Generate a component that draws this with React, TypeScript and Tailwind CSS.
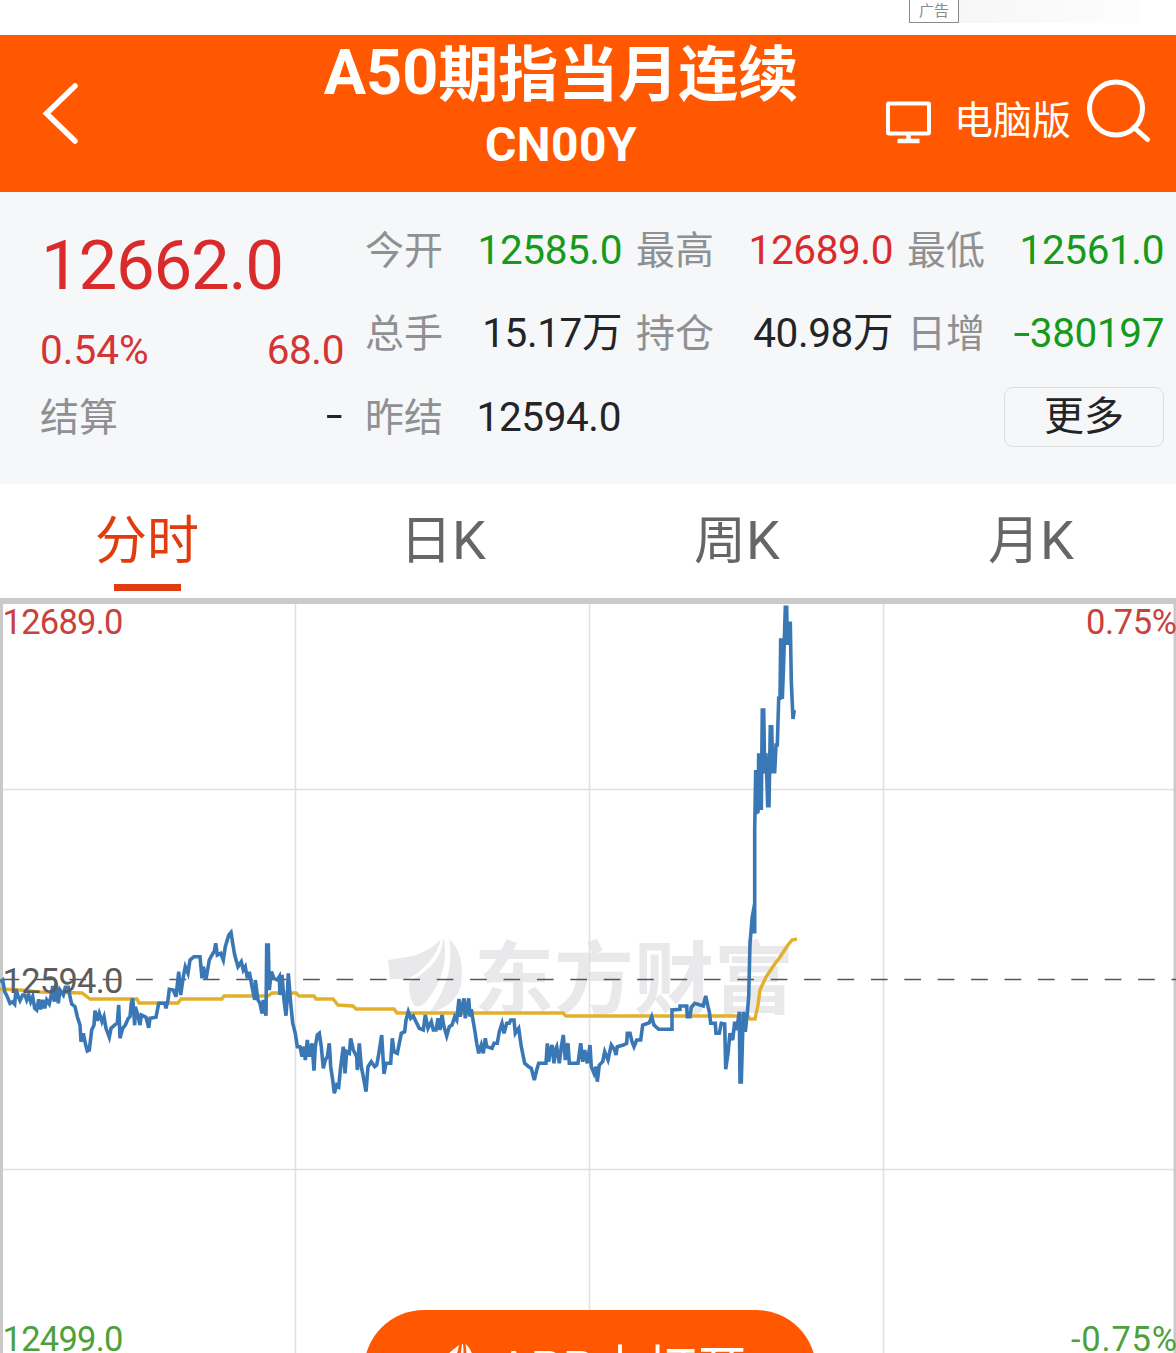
import { clsx } from "clsx";

type Tone = "up" | "down" | "plain";

type Quote = {
  label: string;
  value: string;
  tone: Tone;
};

type Segment = {
  x: number;
  y: number;
  points: string;
};

const toneClass: Record<Tone, string> = {
  up: "text-[#d92b2b]",
  down: "text-[#169a1c]",
  plain: "text-[#222426]",
};

const quoteRows: Quote[][] = [
  [
    { label: "今开", value: "12585.0", tone: "down" },
    { label: "最高", value: "12689.0", tone: "up" },
    { label: "最低", value: "12561.0", tone: "down" },
  ],
  [
    { label: "总手", value: "15.17万", tone: "plain" },
    { label: "持仓", value: "40.98万", tone: "plain" },
    { label: "日增", value: "-380197", tone: "down" },
  ],
];

const tabs = [
  { prefix: "分时", unit: "" },
  { prefix: "日", unit: "K" },
  { prefix: "周", unit: "K" },
  { prefix: "月", unit: "K" },
];

// Price samples, in thirds of a pixel relative to each segment's origin.
const priceSegments: Segment[] = [
  {
    x: 0,
    y: 900,
    points:
      "0,245 8,240 14,275 22,290 30,310 38,305 44,312 48,268 55,290 60,302 68,285 75,285 80,300 86,285 92,305 98,290 104,325 110,330 116,298 122,328 128,300 134,325 140,300 148,312 154,285 158,258 163,305 168,250 175,310 180,270 190,285 196,262 205,262 210,290 215,312 225,320 232,350 240,375 243,425 250,400 257,435 262,453 268,450 275,390 282,375 285,332 292,362 298,340 306,365 312,350 318,385 328,412 333,385 348,372 352,370 356,315 360,415 368,385 376,375 385,355 390,350 394,310 398,295 404,376 406,320 412,340 420,375 424,345 438,352 446,383 450,355 468,352 476,310 494,310 498,325 504,300 508,268 520,270 528,290 536,215 542,285 550,230 556,200 564,220 570,180 582,170 600,170 606,235 610,200 618,238 628,180 640,158",
  },
  {
    x: 160,
    y: 900,
    points:
      "163,155 167,130 172,165 182,160 190,180 196,140 206,105 213,97 218,130 224,165 234,200 244,185 250,210 256,200 262,235 268,215 276,260 284,300 286,240 294,300 300,310 306,340 310,300 318,347 320,135 325,135 328,270 334,215 342,235 352,240 358,230 360,285 366,225 372,300 378,347 382,290 385,220 392,310 398,370 406,400 412,440 420,440 426,470 432,440 436,480 442,420 448,470 456,430 462,512 466,440 472,405 478,400 484,440 490,505 496,480 502,470 508,430 512,500 518,540 523,580 530,555 536,560 542,500 550,440 555,520 560,455 568,460 572,415 580,450 590,470 592,510 598,430 604,500 610,530",
  },
  {
    x: 360,
    y: 900,
    points:
      "10,530 18,575 24,500 34,485 44,500 50,495 55,470 65,405 72,522 78,490 92,490 97,415 102,455 112,460 118,430 124,400 134,395 138,360 145,335 152,355 160,348 168,365 178,385 190,390 196,345 204,385 214,365 220,390 228,390 234,355 240,390 246,345 252,380 260,408 268,380 276,375 284,350 290,360 297,297 301,350 305,325 312,295 316,355 320,330 326,295 330,350 334,328 338,355 345,395 350,430 356,460 364,435 370,460 376,415 380,440 396,445 402,430 412,430 418,395 426,370 432,400 440,370 448,370 452,360 462,360 466,400 476,385 484,440 494,490 506,500 514,505 523,540 530,510 536,490 558,490 562,430 566,485 571,450 576,435 582,490 586,450 590,440 598,490 604,440 610,405 616,480 620,445 624,430 628,490 654,490 662,430 668,485 674,450 682,490",
  },
  {
    x: 580,
    y: 900,
    points:
      "22,490 30,435 34,500 42,520 48,500 52,545 58,495 68,485 74,455 84,480 94,435 104,450 108,465 112,440 130,435 140,430 142,400 150,400 156,425 162,440 170,420 182,420 188,375 208,368 215,350 222,375 236,388 276,388 276,330 300,328 300,318 320,318 322,350 330,350 334,322 344,310 370,318 377,288 384,320 388,335 392,370 406,370 408,400 418,400 424,370 434,372 437,508 444,460 450,400 458,420 464,365 470,390 478,335 480,546 484,546 490,335 496,395 502,340 506,290 510,130 516,60 518,95 522,95 524,10",
  },
  {
    x: 720,
    y: 595,
    points:
      "96,970 100,1010 104,1010 104,700 107,525 111,652 114,650 116,475 120,640 124,640 127,345 131,345 134,535 138,475 143,632 147,632 151,395 155,395 158,530 164,530 168,450 172,450 176,310 180,310 182,135 186,135 187,312 191,200 196,37 200,37 202,150 206,85 211,85 214,260 219,372 223,345",
  },
];

const averagePoints =
  "0,989 20,990 40,992 82,993 90,999 137,999 139,1003 178,1003 181,999 222,999 224,996 268,996 272,993 296,993 299,996 314,996 316,999 333,999 338,1005 353,1006 356,1009 394,1009 397,1013 563,1013 566,1016 748,1016 750,1019 755,1019 758,1005 760,990 766,977 774,965 780,957 788,945 792,940 797,939";

function toPixels({ x, y, points }: Segment): string {
  return points
    .split(" ")
    .map((pair) => {
      const [px, py] = pair.split(",").map(Number);
      return `${(x + px / 3).toFixed(1)},${(y + py / 3).toFixed(1)}`;
    })
    .join(" ");
}

const pricePoints = priceSegments.map(toPixels).join(" ");

function AdStrip() {
  return (
    <div className="flex h-[35px] items-start bg-white pl-[909px]">
      <span className="flex h-[23px] w-[50px] items-center justify-center border border-t-0 border-[#8a8a8a] text-[15px] leading-none text-[#8a8a8a]">
        广告
      </span>
      <span className="h-[23px] w-[182px] bg-linear-to-r from-[#f7f7f7] via-[#fafafa] to-[#fdfdfd]" />
    </div>
  );
}

function Header() {
  return (
    <header className="flex h-[157px] items-start bg-[#ff5800] text-white">
      <svg className="mt-[46px] ml-[40px] h-[66px] w-[42px]" viewBox="0 0 42 66" fill="none">
        <path
          d="M35 5 L6.5 32.5 L35 60"
          stroke="currentColor"
          strokeWidth="5.5"
          strokeLinecap="round"
        />
      </svg>
      <div className="ml-[228px] w-[502px] text-center font-bold">
        <h1 className="flex h-[74px] items-center justify-center text-[60px] leading-none whitespace-nowrap">
          <span className="text-[63px]">A50</span>
          <span className="pt-[8px]">期指当月连续</span>
        </h1>
        <p className="mt-[11px] text-[48px] leading-[50px] tracking-[0.4px]">CN00Y</p>
      </div>
      <svg className="mt-[65px] ml-[73px] h-[44px] w-[47px]" viewBox="0 0 47 44" fill="none">
        <rect x="3" y="3.5" width="41" height="30" rx="1" stroke="currentColor" strokeWidth="4" />
        <path d="M23.5 34v7M12.5 41h22" stroke="currentColor" strokeWidth="4.5" />
      </svg>
      <span className="mt-[61px] ml-[22px] text-[39px] leading-[50px] whitespace-nowrap">电脑版</span>
      <svg className="mt-[43px] ml-[15px] h-[66px] w-[66px]" viewBox="0 0 66 66" fill="none">
        <circle cx="30" cy="30.5" r="26.5" stroke="currentColor" strokeWidth="5" />
        <path d="M48 49.5 L61.5 61.5" stroke="currentColor" strokeWidth="5" strokeLinecap="round" />
      </svg>
    </header>
  );
}

function QuoteValue({ value }: { value: string }) {
  if (!value.startsWith("-")) {
    return <>{value}</>;
  }

  return (
    <>
      <span className="inline-block origin-right scale-x-150">-</span>
      {value.slice(1)}
    </>
  );
}

function QuoteCell({ label, value, tone }: Quote) {
  return (
    <div className="flex items-center justify-between whitespace-nowrap">
      <span className="pt-[3px] text-[39px] text-[#8f9092]">{label}</span>
      <span className={clsx("text-[40.5px] tracking-[-0.4px]", toneClass[tone])}>
        <QuoteValue value={value} />
      </span>
    </div>
  );
}

function QuotePanel() {
  return (
    <section className="flex h-[292px] bg-[#f5f7f9] pl-[40px] leading-none">
      <div className="flex w-[304px] flex-col">
        <div className="mt-[38px] flex h-[70px] items-center pl-[1px] text-[69px] tracking-[-1.3px] text-[#d92b2b]">
          12662.0
        </div>
        <div className="mt-[22px] flex h-[56px] items-center justify-between text-[40.5px] text-[#d43434]">
          <span>0.54%</span>
          <span className="tracking-[-0.4px]">68.0</span>
        </div>
        <div className="mt-[10px] flex h-[56px] items-center justify-between text-[39px]">
          <span className="pt-[5px] text-[#8f9092]">结算</span>
          <span className="origin-right scale-x-150 pr-[1px] text-[40px] text-[#222426]">-</span>
        </div>
      </div>
      <div className="mt-[30px] ml-[21px] w-[799px]">
        {quoteRows.map((row) => (
          <div key={row[0].label} className="mb-[27px] grid h-[56px] grid-cols-3 gap-[14px]">
            {row.map((quote) => (
              <QuoteCell key={quote.label} {...quote} />
            ))}
          </div>
        ))}
        <div className="flex h-[58px] items-center justify-between">
          <div className="w-[256px]">
            <QuoteCell label="昨结" value="12594.0" tone="plain" />
          </div>
          <button className="h-[60px] w-[160px] rounded-[9px] border-[1.5px] border-[#dcdee0] text-[40px] text-[#222426]">
            更多
          </button>
        </div>
      </div>
    </section>
  );
}

function Tabs() {
  return (
    <nav className="grid h-[114px] grid-cols-4 bg-white">
      {tabs.map(({ prefix, unit }, index) => (
        <div
          key={prefix}
          className={clsx(
            "flex flex-col items-center text-[52px] leading-none",
            index === 0 ? "text-[#e03c10]" : "pl-[4px] text-[#666666]",
          )}
        >
          <span className="mt-[20px] flex h-[70px] items-center">
            <span className="pt-[5px]">{prefix}</span>
            {unit ? <span className="pt-[3px] text-[54px]">{unit}</span> : null}
          </span>
          {index === 0 ? <span className="mt-[10px] h-[7px] w-[67px] bg-[#e03c10]" /> : null}
        </div>
      ))}
    </nav>
  );
}

function Watermark() {
  return (
    <g fill="#e9e9ec">
      <path d="M388 960 L413 956 C425 952 435 946 441 939 C437 955 425 970 408 979 L390 979 Z" />
      <path d="M443 939 C442 958 430 970 409 982 C409 992 410 999 414 1005 C417 1008 421 1006 425 1003 C440 985 448 965 444 939 Z" />
      <path d="M449 939 C460 948 464 965 461 985 C457 1000 445 1010 430 1012 C446 990 454 965 449 939 Z" />
      <text
        x="474"
        y="1008"
        fontSize="79"
        fontWeight="700"
        textLength="320"
        lengthAdjust="spacingAndGlyphs"
      >
        东方财富
      </text>
    </g>
  );
}

function Chart() {
  return (
    <div className="relative h-[755px] bg-white">
      <svg className="block h-[755px] w-[1176px]" viewBox="0 598 1176 755" fill="none">
        <Watermark />
        <path
          d="M295.5 604V1353M589.5 604V1353M883.5 604V1353M0 789.5H1176M0 1169.5H1176"
          stroke="#e0e0e0"
          strokeWidth="1.6"
        />
        <path d="M0 601H1176" stroke="#cacaca" strokeWidth="6" />
        <path d="M1.5 604V1353M1175 604V1353" stroke="#cacaca" strokeWidth="3" />
        <polyline points={averagePoints} stroke="#e3b02c" strokeWidth="3.4" />
        <path d="M2.5 979.5H1176" stroke="#555555" strokeWidth="1.6" strokeDasharray="16.7 16.7" />
        <polyline points={pricePoints} stroke="#3a78b5" strokeWidth="3.6" />
        <g fontSize="34.5">
          <text x="2.5" y="634" fill="#c8423c" textLength="121">
            12689.0
          </text>
          <text x="2.5" y="993" fill="#5c5c5c" textLength="121">
            12594.0
          </text>
          <text x="2.5" y="1351" fill="#4ea03c" textLength="121">
            12499.0
          </text>
          <text x="1086" y="634" fill="#c8423c" textLength="91">
            0.75%
          </text>
          <text x="1071" y="1351" fill="#4ea03c" textLength="106">
            -0.75%
          </text>
        </g>
      </svg>
      <button className="absolute top-[712px] left-[364px] flex h-[120px] w-[452px] rounded-full bg-[#ff5800] text-white">
        <svg className="mt-[34px] ml-[73px] h-[52px] w-[50px]" viewBox="0 0 50 52" fill="currentColor">
          <path d="M1 16 C10 12 15 6 22 1 C20 14 14 22 5 32 Z" />
          <path d="M25 0 C24 16 18 28 8 36 L14 46 C24 34 28 16 26 0 Z" />
          <path d="M28.5 0 C38 8 40 26 34 38 C30 44 26 48 20 48 C29 34 31 16 28.5 0 Z" />
        </svg>
        <span className="mt-[29px] ml-[10px] text-[51px] leading-[64px] whitespace-nowrap">
          APP内打开
        </span>
      </button>
    </div>
  );
}

export default function App() {
  return (
    <main className="h-[1353px] w-[1176px] overflow-hidden bg-white font-[Roboto,'Noto_Sans_CJK_SC',sans-serif]">
      <AdStrip />
      <Header />
      <QuotePanel />
      <Tabs />
      <Chart />
    </main>
  );
}
